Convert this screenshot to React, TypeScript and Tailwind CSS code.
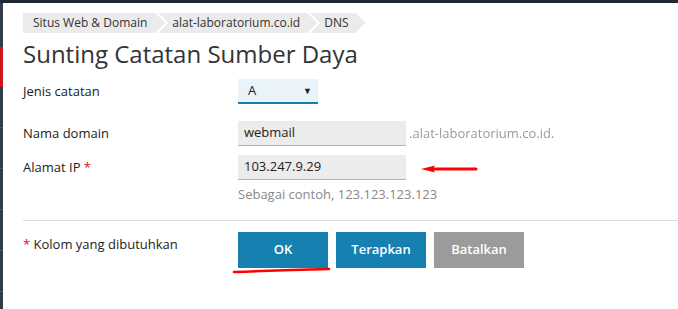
import React from 'react';

const crumbs = ['Situs Web & Domain', 'alat-laboratorium.co.id', 'DNS'];

function Breadcrumbs() {
  return (
    <div className="flex h-[20px] text-[12px] text-[#333]">
      {crumbs.map((c, i) => (
        <div
          key={c}
          className={
            i === 0
              ? 'flex items-center bg-[#ebebeb] pl-[10px] pr-[18px] [clip-path:polygon(0_0,calc(100%-10px)_0,100%_50%,calc(100%-10px)_100%,0_100%)]'
              : 'flex items-center bg-[#ebebeb] pl-[14px] pr-[17px] ml-[-7px] [clip-path:polygon(0_0,calc(100%-10px)_0,100%_50%,calc(100%-10px)_100%,0_100%,10px_50%)]'
          }
        >
          {c}
        </div>
      ))}
    </div>
  );
}

function SideStrip() {
  return (
    <div className="flex w-[3px] flex-col bg-[#2f3d4a]">
      <div className="h-[44px]" />
      <div className="h-[40px] bg-[#d0141b]" />
      {[0, 1, 2, 3, 4].map((i) => (
        <div key={i} className="h-[41px] border-b border-[#4b5a68]" />
      ))}
    </div>
  );
}

export default function App() {
  return (
    <div className="flex h-[309px] w-[678px] flex-col overflow-hidden bg-white font-['Open_Sans',sans-serif] text-[13px] text-[#222]">
      <div className="h-[3px] bg-[#1e2832]" />
      <div className="flex flex-1">
        <SideStrip />
        <div className="flex flex-1 flex-col pt-[10px]">
          <div className="pl-[20px]">
            <Breadcrumbs />
            <h1 className="mt-[4px] text-[24px] leading-[34px] text-[#333]">Sunting Catatan Sumber Daya</h1>
          </div>

          <div className="mt-[8px] flex flex-col pl-[20px]">
            {/* Jenis catatan */}
            <div className="flex items-center">
              <div className="w-[215px]">Jenis catatan</div>
              <div className="flex h-[25px] w-[80px] items-center justify-between border-b-2 border-[#1a7db0] bg-[#eaf3fa] pl-[10px] pr-[6px]">
                <span>A</span>
                <span className="text-[9px]">▼</span>
              </div>
            </div>

            {/* Nama domain */}
            <div className="mt-[17px] flex items-center">
              <div className="w-[215px]">Nama domain</div>
              <div className="flex h-[25px] w-[168px] items-center border-b border-[#a9b4bd] bg-[#ececec] pl-[6px]">webmail</div>
              <span className="ml-[3px] text-[13px] text-[#9a9a9a] blur-[0.7px]">.alat-laboratorium.co.id.</span>
            </div>

            {/* Alamat IP */}
            <div className="mt-[9px] flex items-center">
              <div className="w-[215px]">
                Alamat IP <span className="text-[#d0141b]">*</span>
              </div>
              <div className="flex h-[25px] w-[168px] items-center border-b border-[#a9b4bd] bg-[#ececec] pl-[6px]">103.247.9.29</div>
              <svg width="60" height="10" viewBox="0 0 60 10" className="ml-[14px] mt-[2px]">
                <path d="M14 5 H56" stroke="#f00" strokeWidth="3" strokeLinecap="round" />
                <path d="M1 5 L15 1.5 L13 5 L15 8.5 Z" fill="#f00" />
              </svg>
            </div>
            <div className="ml-[215px] mt-[6px] leading-[16px] text-[#888]">Sebagai contoh, 123.123.123.123</div>
          </div>

          <div className="ml-[20px] mt-[18px] border-t border-[#dcdcdc]" />

          <div className="mt-[11px] flex pl-[20px]">
            <div className="mt-[3px] w-[215px] leading-[18px]">
              <span className="text-[#d0141b]">*</span> Kolom yang dibutuhkan
            </div>
            <div className="flex gap-[8px] text-[13px] font-semibold text-white">
              <div className="relative">
                <button className="h-[36px] w-[90px] bg-[#1680b0]">OK</button>
                <svg width="100" height="8" viewBox="0 0 100 8" className="absolute left-[-6px] top-[35px]">
                  <path d="M2 5 Q50 3 97 2" stroke="#f00" strokeWidth="2.5" fill="none" strokeLinecap="round" />
                </svg>
              </div>
              <button className="h-[36px] w-[90px] bg-[#1680b0]">Terapkan</button>
              <button className="h-[36px] w-[90px] bg-[#9b9b9b]">Batalkan</button>
            </div>
          </div>
        </div>
      </div>
    </div>
  );
}
